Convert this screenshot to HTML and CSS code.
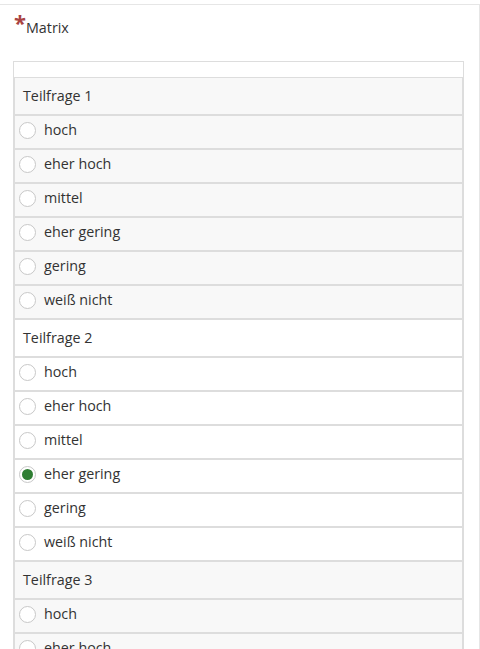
FILE: index.html
```html
<!DOCTYPE html>
<html lang="de">
<head>
<meta charset="utf-8">
<link rel="stylesheet" href="styles.css">
</head>
<body>
<div class="card">
  <div class="question"><span class="req">*</span>Matrix</div>
  <table class="matrix">
    <thead><tr><th class="head"></th></tr></thead>
    <tbody class="grp odd">
      <tr><td class="sub">Teilfrage 1</td></tr>
      <tr><td class="opt"><span class="radio"></span>hoch</td></tr>
      <tr><td class="opt"><span class="radio"></span>eher hoch</td></tr>
      <tr><td class="opt"><span class="radio"></span>mittel</td></tr>
      <tr><td class="opt"><span class="radio"></span>eher gering</td></tr>
      <tr><td class="opt"><span class="radio"></span>gering</td></tr>
      <tr><td class="opt"><span class="radio"></span>weiß nicht</td></tr>
    </tbody>
    <tbody class="grp even">
      <tr><td class="sub">Teilfrage 2</td></tr>
      <tr><td class="opt"><span class="radio"></span>hoch</td></tr>
      <tr><td class="opt"><span class="radio"></span>eher hoch</td></tr>
      <tr><td class="opt"><span class="radio"></span>mittel</td></tr>
      <tr><td class="opt"><span class="radio checked"></span>eher gering</td></tr>
      <tr><td class="opt"><span class="radio"></span>gering</td></tr>
      <tr><td class="opt"><span class="radio"></span>weiß nicht</td></tr>
    </tbody>
    <tbody class="grp odd">
      <tr><td class="sub">Teilfrage 3</td></tr>
      <tr><td class="opt"><span class="radio"></span>hoch</td></tr>
      <tr><td class="opt"><span class="radio"></span>eher hoch</td></tr>
      <tr><td class="opt"><span class="radio"></span>mittel</td></tr>
    </tbody>
  </table>
</div>
</body>
</html>
```
FILE: styles.css
```css
html, body {
  margin: 0;
  padding: 0;
  background: #fff;
}
body {
  font-family: "Open Sans", "Liberation Sans", sans-serif;
  font-size: 14.3px;
  color: #333;
  overflow: hidden;
  height: 649px;
}
.card {
  margin-top: 4px;
  width: 480px;
  box-sizing: border-box;
  border-top: 1px solid #e6e6e6;
  border-right: 1px solid #e6e6e6;
  padding: 13px 15px 0 13px;
}
.question {
  line-height: 20px;
  height: 20px;
  padding-left: 1px;
}
.req {
  color: #a94442;
  font-weight: bold;
  font-size: 22px;
  line-height: 10px;
  position: relative;
  top: -2px;
}
.matrix {
  margin-top: 23px;
  width: 100%;
  border: 1px solid #ddd;
  border-collapse: separate;
  border-spacing: 0;
}
.matrix td, .matrix th {
  padding: 0;
  text-align: left;
  font-weight: normal;
}
.matrix .head {
  height: 15px;
}
.matrix td {
  border: 1px solid #ddd;
  line-height: 20px;
  vertical-align: middle;
}
.grp.odd td {
  background: #f8f8f8;
}
.grp.even td {
  background: #fff;
}
.matrix .sub {
  height: 36px;
  padding-left: 8px;
}
.matrix .opt {
  height: 28px;
  padding: 0 0 4px 4px;
}
.radio {
  display: inline-block;
  width: 15px;
  height: 15px;
  border: 1px solid #c8c8c8;
  border-radius: 50%;
  background: #fff;
  vertical-align: middle;
  margin-right: 8px;
  position: relative;
  top: -1px;
  box-sizing: content-box;
}
.radio.checked::after {
  content: "";
  position: absolute;
  left: 2px;
  top: 2px;
  width: 11px;
  height: 11px;
  border-radius: 50%;
  background: #2e7d32;
}
```
